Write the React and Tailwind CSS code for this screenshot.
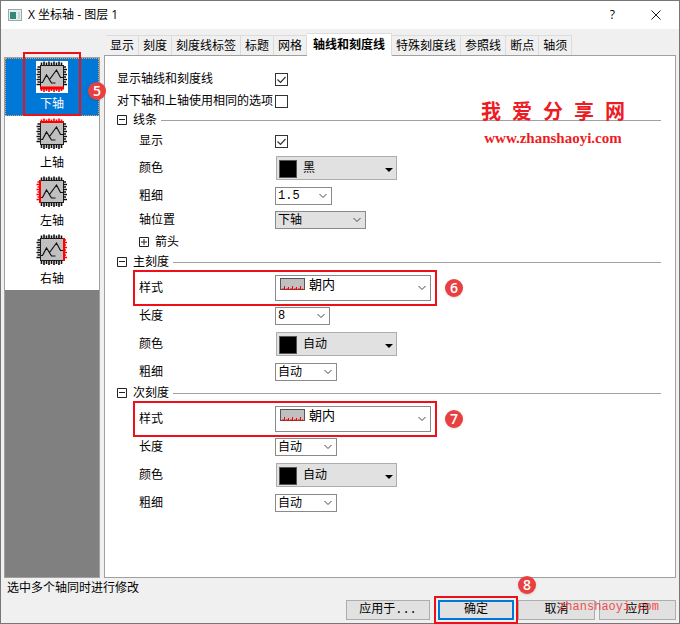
import clsx from "clsx";

const AXES = [
  { id: "bottom", label: "下轴" },
  { id: "top", label: "上轴" },
  { id: "left", label: "左轴" },
  { id: "right", label: "右轴" },
];

const TABS = ["显示", "刻度", "刻度线标签", "标题", "网格", "轴线和刻度线", "特殊刻度线", "参照线", "断点", "轴须"];

const TICKS_X = [5, 7.5, 10, 12.5, 15, 17.5, 20, 22.5, 25];
const TICKS_Y = [6, 8.5, 11, 13.5, 16, 18.5, 21, 23.5];

const TICK_PATHS = {
  top: TICKS_X.map((x, i) => `M${x + 0.5} 4.5V${i % 2 ? 0.5 : 1.5}`).join(""),
  bottom: TICKS_X.map((x, i) => `M${x + 0.5} 26.5V${i % 2 ? 31 : 30}`).join(""),
  left: TICKS_Y.map((y, i) => `M4.5 ${y}H${i % 2 ? 0.5 : 1.5}`).join(""),
  right: TICKS_Y.map((y, i) => `M27 ${y}H${i % 2 ? 31 : 30}`).join(""),
};

const EDGE_PATHS = {
  top: "M4 4h24",
  bottom: "M4 27h24",
  left: "M4 4v23",
  right: "M28 4v23",
};

function AxisIcon({ side }) {
  return (
    <svg width="32" height="32" viewBox="0 0 32 32" fill="none" className="bg-white">
      <rect x="4.5" y="4.5" width="23" height="22" fill="#c0c0c0" stroke="#222" />
      <path
        d="M5 21.5h1.5L10.5 14l3 4.5L20.5 9l4 7.5H28M13 18l2.5 4h4"
        stroke="#111"
        strokeWidth="1.2"
      />
      {Object.entries(TICK_PATHS).map(([name, d]) => (
        <path key={name} d={d} stroke={name === side ? "#ff0000" : "#111"} strokeWidth="1.6" />
      ))}
      <path d={EDGE_PATHS[side]} stroke="#ff0000" strokeWidth={side === "bottom" ? 3 : 2} />
    </svg>
  );
}

function Badge({ children, className }) {
  return (
    <span
      className={clsx(
        "absolute flex size-[18px] items-center justify-center rounded-full bg-[#e84040] font-['Open_Sans',sans-serif] text-sm leading-none font-semibold text-white shadow",
        className
      )}
    >
      {children}
    </span>
  );
}

function Chevron() {
  return (
    <svg width="8" height="5" viewBox="0 0 8 5" fill="none" className="pointer-events-none absolute right-1 top-1/2 -translate-y-1/2">
      <path d="M.5.5L4 4 7.5.5" stroke="#444" />
    </svg>
  );
}

function Select({ id, value, className }) {
  return (
    <div className={clsx("relative h-[18px] border border-[#8a8a8a]", className)}>
      <select id={id} className="block size-full appearance-none px-0.5 leading-4 outline-none">
        <option>{value}</option>
      </select>
      <Chevron />
    </div>
  );
}

function ColorSelect({ id, value }) {
  return (
    <div className="relative ml-px h-6 w-[121px] border border-[#adadad] bg-[#e1e1e1]">
      <select id={id} className="block size-full appearance-none pl-[26px] outline-none">
        <option>{value}</option>
      </select>
      <span className="pointer-events-none absolute left-0.5 top-[3px] size-[18px] border border-[#555] bg-black" />
      <svg width="8" height="4" viewBox="0 0 8 4" className="pointer-events-none absolute right-[3px] top-[11px]">
        <path d="M0 0h8L4 4z" fill="#000" />
      </svg>
    </div>
  );
}

function StyleSelect({ id }) {
  return (
    <div className="relative h-[26px] w-[156px] border border-[#8a8a8a] bg-white">
      <select id={id} className="block h-[18px] w-full appearance-none pl-[33px] text-[13px] leading-4 outline-none">
        <option>朝内</option>
      </select>
      <svg width="25" height="12" viewBox="0 0 25 12" className="pointer-events-none absolute left-1 top-0.5">
        <rect x=".5" y=".5" width="24" height="11" fill="#c0c0c0" stroke="#555" />
        <path d="M4.5 8v4m4-3v3m4-4v4m4-3v3m4-4v4" stroke="#ff0000" />
        <path d="M2 11h21" stroke="#ff0000" strokeDasharray="3 1" />
      </svg>
      <Chevron />
    </div>
  );
}

function Check({ id, checked }) {
  return (
    <span className="relative block size-[13px]">
      <input id={id} type="checkbox" defaultChecked={checked} className="peer block size-[13px] appearance-none border border-[#333] bg-white" />
      <svg width="13" height="13" viewBox="0 0 13 13" fill="none" className="pointer-events-none absolute inset-0 hidden peer-checked:block">
        <path d="M2.5 6.5L5.5 9.5l5-5.5" stroke="#333" strokeWidth="1.2" />
      </svg>
    </span>
  );
}

function Toggle({ plus }) {
  return (
    <svg width="10" height="10" viewBox="0 0 10 10" fill="none" className="shrink-0">
      <path d={plus ? "M.5.5h9v9h-9zM2 5h6M5 2v6" : "M.5.5h9v9h-9zM2 4.5h6"} stroke="#222" />
    </svg>
  );
}

function Row({ id, label, indent = true, className, children }) {
  return (
    <div className={clsx("flex items-center", className)}>
      <label htmlFor={id} className={clsx("shrink-0 whitespace-nowrap", indent ? "w-[136px]" : "w-[158px]")}>
        {label}
      </label>
      {children}
    </div>
  );
}

function Group({ title, children }) {
  return (
    <section>
      <div className="flex h-4 items-center pr-3.5">
        <button type="button" className="flex items-center gap-1.5 whitespace-nowrap">
          <Toggle />
          {title}
        </button>
        <span className="ml-1 h-px grow bg-[#a0a0a0]" />
      </div>
      <div className="pl-[22px]">{children}</div>
    </section>
  );
}

function StyleRow({ id, badge }) {
  return (
    <div className="relative -ml-1.5 flex h-9 w-[304px] items-center border-2 border-[#ed1018] pl-1">
      <label htmlFor={id} className="w-[136px]">
        样式
      </label>
      <StyleSelect id={id} />
      <Badge className="-right-7 top-[7px]">{badge}</Badge>
    </div>
  );
}

function DialogButton({ children, primary, className }) {
  return (
    <button
      type="button"
      className={clsx(
        "block h-5 bg-[#e1e1e1] font-['Liberation_Mono','Noto_Sans_CJK_SC',sans-serif] leading-4",
        primary ? "border-2 border-[#0078d7]" : "border border-[#adadad]",
        className
      )}
    >
      {children}
    </button>
  );
}

export default function App() {
  return (
    <div className="flex min-h-screen flex-col border border-[#777] bg-[#f0f0f0] font-['Liberation_Sans','Noto_Sans_CJK_SC',sans-serif] text-xs leading-4 text-black">
      <header className="flex h-7 items-center bg-white pl-[7px] pr-[18px]">
        <svg width="14" height="12" viewBox="0 0 14 12">
          <rect x=".5" y=".5" width="13" height="11" fill="#e8eeee" stroke="#9aa" />
          <path d="M2 3h6v7H2z" fill="#358878" />
          <path d="M10 3h2v7h-2z" fill="#c5d5dd" />
        </svg>
        <h1 className="ml-1.5 grow font-['Open_Sans','Noto_Sans_CJK_SC',sans-serif]">X 坐标轴 - 图层 1</h1>
        <button type="button" aria-label="帮助" className="mr-9 font-['Open_Sans',sans-serif]">
          ?
        </button>
        <button type="button" aria-label="关闭">
          <svg width="10" height="10" viewBox="0 0 10 10" fill="none">
            <path d="M.5.5l9 9M9.5.5l-9 9" stroke="#222" />
          </svg>
        </button>
      </header>

      <main className="flex grow gap-1 px-[3px] pt-1">
        <aside className="relative z-10 mt-6 flex w-24 shrink-0 flex-col border border-[#a0a0a0] bg-[#808080]">
          {AXES.map((axis, i) => (
            <button
              key={axis.id}
              type="button"
              className={clsx(
                "relative flex h-[58px] flex-col items-center justify-between pb-[3px] pt-0.5",
                i === 0 ? "z-10 border border-dotted border-[#f0a050] bg-[#0078d7] text-white" : "bg-white"
              )}
            >
              <AxisIcon side={axis.id} />
              {axis.label}
              {i === 0 && (
                <>
                  <span className="absolute -bottom-px -top-[7px] left-[17px] w-[58px] border-2 border-[#ed1018]" />
                  <Badge className="-right-2 top-[23px]">5</Badge>
                </>
              )}
            </button>
          ))}
        </aside>

        <div className="flex grow flex-col">
          <nav className="flex h-[22px] items-end pl-0.5">
            {TABS.map((tab) => (
              <button
                key={tab}
                type="button"
                className={clsx(
                  "whitespace-nowrap border-r border-t border-[#dcdcdc]",
                  tab === "轴线和刻度线" ? "relative z-10 -mb-px h-[23px] bg-white px-1.5 font-bold" : "h-5 px-1"
                )}
              >
                {tab}
              </button>
            ))}
          </nav>

          <div className="relative grow border border-[#a0a0a0] bg-white pl-3 pt-3">
            <Row id="show-axis" label="显示轴线和刻度线" indent={false} className="h-[22px]">
              <Check id="show-axis" checked />
            </Row>
            <Row id="same" label="对下轴和上轴使用相同的选项" indent={false} className="h-[22px]">
              <Check id="same" />
            </Row>

            <Group title="线条">
              <Row id="line-show" label="显示" className="h-[26px]">
                <Check id="line-show" checked />
              </Row>
              <Row id="line-color" label="颜色" className="h-7">
                <ColorSelect id="line-color" value="黑" />
              </Row>
              <Row id="line-width" label="粗细" className="h-7">
                <Select id="line-width" value="1.5" className="w-[57px] font-['Liberation_Mono',monospace]" />
              </Row>
              <Row id="axis-pos" label="轴位置" className="h-5">
                <Select id="axis-pos" value="下轴" className="w-[91px] bg-[#e1e1e1]" />
              </Row>
              <button type="button" className="flex h-6 items-center gap-1.5">
                <Toggle plus />
                箭头
              </button>
            </Group>

            <Group title="主刻度">
              <StyleRow id="major-style" badge="6" />
              <Row id="major-length" label="长度" className="h-5">
                <Select id="major-length" value="8" className="w-[55px] font-['Liberation_Mono',monospace]" />
              </Row>
              <Row id="major-color" label="颜色" className="h-9">
                <ColorSelect id="major-color" value="自动" />
              </Row>
              <Row id="major-width" label="粗细" className="h-5">
                <Select id="major-width" value="自动" className="w-[62px]" />
              </Row>
            </Group>

            <div className="h-[3px]" />

            <Group title="次刻度">
              <StyleRow id="minor-style" badge="7" />
              <Row id="minor-length" label="长度" className="h-5">
                <Select id="minor-length" value="自动" className="w-[62px]" />
              </Row>
              <Row id="minor-color" label="颜色" className="h-9">
                <ColorSelect id="minor-color" value="自动" />
              </Row>
              <Row id="minor-width" label="粗细" className="h-5">
                <Select id="minor-width" value="自动" className="w-[62px]" />
              </Row>
            </Group>

            <div className="absolute right-[50px] top-11 w-36 font-bold text-[#ed1c24]">
              <p className="flex justify-between text-xl leading-6">
                {"我爱分享网".split("").map((c) => (
                  <span key={c}>{c}</span>
                ))}
              </p>
              <p className="mt-1 text-center font-['Liberation_Serif',serif] text-[15px] leading-5">www.zhanshaoyi.com</p>
            </div>
          </div>
        </div>
      </main>

      <footer className="relative h-[45px] pl-1.5 pt-0.5">
        <p>选中多个轴同时进行修改</p>
        <div className="mt-1 flex items-center justify-end gap-1 pr-[3px]">
          <DialogButton className="mr-1 w-[84px]">应用于...</DialogButton>
          <div className="relative">
            <DialogButton primary className="w-[76px]">
              确定
            </DialogButton>
            <span className="pointer-events-none absolute -inset-1 border-2 border-[#ed1018]" />
            <Badge className="-right-[22px] -top-6">8</Badge>
          </div>
          <DialogButton className="w-[77px]">取消</DialogButton>
          <DialogButton className="w-[77px]">应用</DialogButton>
        </div>
        <span className="pointer-events-none absolute bottom-2 right-5 font-['Liberation_Mono',monospace] text-xs text-[#ed5050]">
          zhanshaoyi.com
        </span>
      </footer>
    </div>
  );
}
